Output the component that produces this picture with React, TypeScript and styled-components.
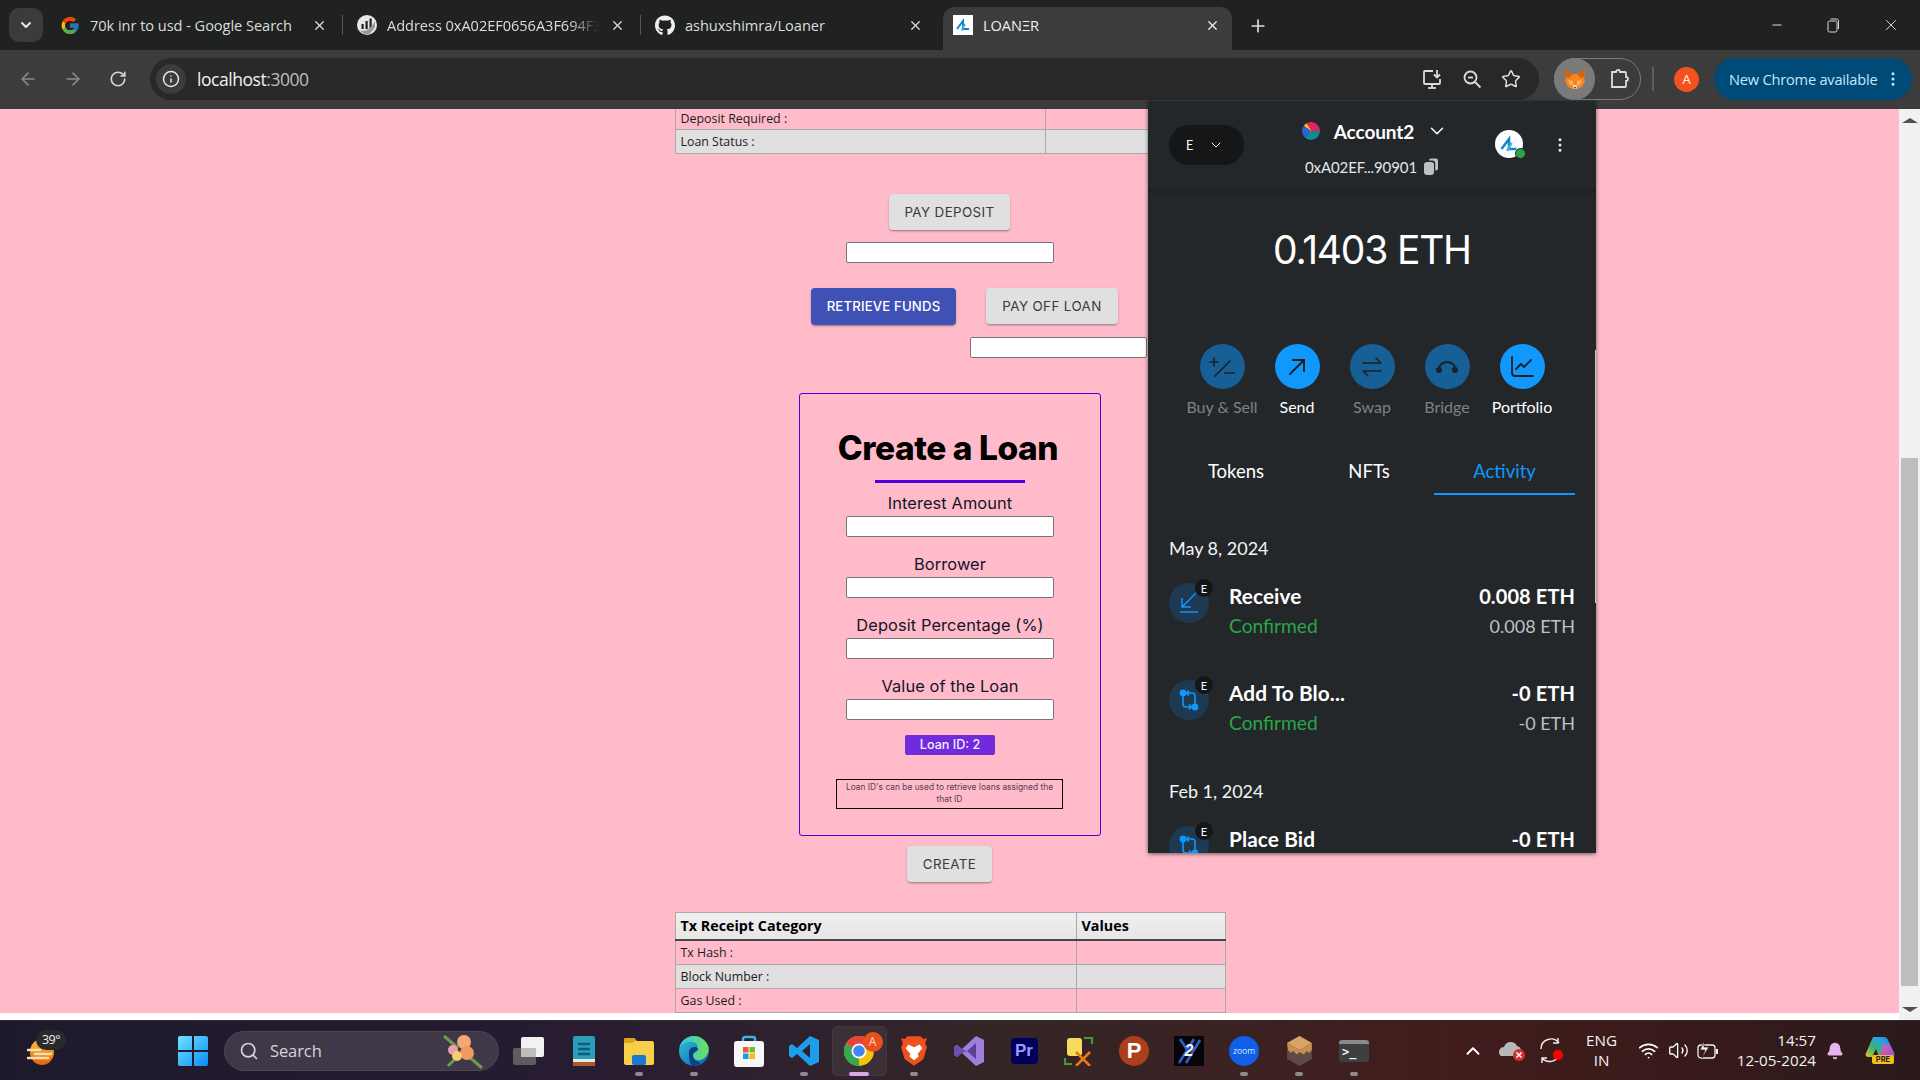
import React from "react";
import styled, { createGlobalStyle } from "styled-components";
import { X, Plus, Minus, ArrowLeft, ArrowRight, RotateCw, Info, Search, Star, ChevronDown, ChevronUp, EllipsisVertical, Wifi, Volume2, Bell } from "lucide-react";
import { FaGithub } from "react-icons/fa";
import { FcGoogle } from "react-icons/fc";

const UI = `"Open Sans", "Noto Sans", sans-serif`;
const GEO = `Inter, "Noto Sans", sans-serif`;
const MM = `Lato, Inter, sans-serif`;
const TABLE = `"Open Sans", "Noto Sans", sans-serif`;

const Global = createGlobalStyle`
  html, body { margin: 0; padding: 0; background: #fff; overflow: hidden; }
  * { box-sizing: border-box; }
`;

const Window = styled.div`
  width: 1920px; height: 1080px; display: flex; flex-direction: column; position: relative; overflow: hidden;
  font-family: ${UI};
`;

/* ---------- browser chrome ---------- */
const TabStrip = styled.div`
  height: 50px; background: #202221; display: flex; align-items: flex-end; padding-left: 9px; flex: none;
`;
const TabSearch = styled.div`
  width: 34px; height: 34px; margin-bottom: 8px; border-radius: 10px; background: #3a3b3b; color: #e6e6e6;
  display: flex; align-items: center; justify-content: center;
`;
const Tab = styled.div<{ $w: number; $active?: boolean; $pad: number; $padR: number; $sep?: boolean }>`
  width: ${p => p.$w}px; height: 43px; display: flex; align-items: center; padding: 0 ${p => p.$padR}px 7px ${p => p.$pad}px; gap: 10px;
  color: ${p => (p.$active ? "#f0f0f0" : "#dcdcdc")}; font-size: 14.6px; letter-spacing: -0.05px; white-space: nowrap;
  background: ${p => (p.$active ? "#3c3c3c" : "transparent")};
  border-radius: 12px 12px 0 0; position: relative;
  ${p => p.$sep ? `&::after { content: ""; position: absolute; right: 0; top: 8px; height: 20px; width: 1px; background: #555; }` : ""}
`;
const TabIcon = styled.span`
  width: 20px; height: 20px; display: flex; align-items: center; justify-content: center; flex: none;
`;
const LoanerTile = styled(TabIcon)`
  background: #fff;
`;
const TabTitle = styled.span`
  flex: 1; overflow: hidden; min-width: 0;
`;
const FadedTitle = styled(TabTitle)`
  -webkit-mask-image: linear-gradient(90deg, #000 85%, transparent);
  mask-image: linear-gradient(90deg, #000 85%, transparent);
`;
const NewTab = styled.div`
  width: 26px; height: 26px; margin: 0 0 11px 13px; color: #dcdcdc; display: flex; align-items: center; justify-content: center;
`;
const WindowControls = styled.div`
  margin-left: auto; display: flex; height: 50px; align-items: center; color: #d8d8d8; padding-right: 1px;
`;
const WinButton = styled.div`
  width: 57px; height: 40px; display: flex; align-items: center; justify-content: center;
`;
const Toolbar = styled.div`
  height: 59px; flex: none; background: #3c3c3c; display: flex; align-items: center; padding: 0 0 1px 5px;
`;
const NavButton = styled.div<{ $dim?: boolean }>`
  width: 45px; height: 40px; display: flex; align-items: center; justify-content: center;
  color: ${p => (p.$dim ? "#8a8a8a" : "#d6d6d6")};
`;
const Omnibox = styled.div`
  width: 1389px; height: 42px; margin-left: 10px; background: #282828; border-radius: 21px; display: flex; align-items: center;
  padding: 0 18px 0 6px; color: #e8e8e8;
`;
const InfoBubble = styled.div`
  width: 30px; height: 30px; border-radius: 50%; background: #3c3c3c; display: flex; align-items: center; justify-content: center; color: #e6e6e6;
`;
const Url = styled.span`
  font-size: 17.5px; margin-left: 11px; letter-spacing: -0.45px; color: #f2f2f2;
`;
const UrlPort = styled.span`color: #bdbdbd;`;
const OmniIcons = styled.div`
  margin-left: auto; display: flex; align-items: center; gap: 19px; color: #dcdcdc;
`;
const ExtPill = styled.div`
  width: 87px; height: 42px; margin-left: 15px; border: 1px solid #7a7a7a; border-radius: 21px; display: flex; align-items: center; justify-content: space-between; padding-right: 11px;
  flex: none;
`;
const FoxBubble = styled.div`
  width: 41px; height: 42px; margin: -1px 0 -1px -1px; border-radius: 21px; background: #7a7a7a; display: flex; align-items: center; justify-content: center;
`;
const ToolDivider = styled.div`
  width: 2px; height: 24px; background: #5f5f5f; margin-left: 11px; flex: none;
`;
const Avatar = styled.div`
  width: 25px; height: 25px; border-radius: 50%; margin-left: 20px; background: #f4511e; color: #ffe; font-size: 13px;
  display: flex; align-items: center; justify-content: center; flex: none;
`;
const UpdatePill = styled.div`
  width: 198px; height: 42px; margin-left: 15px; background: #004a77; border-radius: 21px; color: #c2e7ff; font-size: 14.6px; letter-spacing: -0.2px;
  display: flex; align-items: center; justify-content: space-between; padding: 0 10px 0 15px; flex: none; white-space: nowrap;
`;

/* ---------- page ---------- */
const Viewport = styled.div`
  height: 911px; flex: none; display: flex; background: #fff;
`;
const PageArea = styled.div`
  width: 1899px; height: 904px; background: #ffbbca; overflow: hidden; display: flex; flex-direction: column; align-items: center; padding-left: 1px;
`;
const Scrollbar = styled.div`
  width: 21px; height: 911px; background: #f1f1f1; display: flex; flex-direction: column; align-items: center; color: #505050; font-size: 0;
`;
const ScrollThumb = styled.div`
  width: 17px; height: 528px; margin-top: 335px; background: #bdbdbd; flex: none;
`;
const ArrowUp = styled.div`
  width: 0; height: 0; margin-top: 9px; border: 5px solid transparent; border-top: 0; border-bottom: 5px solid #505050; border-left-width: 8px; border-right-width: 8px; flex: none;
`;
const ArrowDown = styled.div`
  width: 0; height: 0; margin-top: 21px; border: 5px solid transparent; border-bottom: 0; border-top: 5px solid #505050; border-left-width: 8px; border-right-width: 8px; flex: none;
`;

const DataTable = styled.table`
  width: 550px; table-layout: fixed; border-collapse: collapse; font-family: ${TABLE}; font-size: 12.4px; color: #1c1c1c; flex: none;
  td, th { border: 1px solid #a9a9a9; text-align: left; overflow: hidden; white-space: nowrap; }
  td { height: 24px; padding: 1px 5px 0; }
  th { height: 28px; padding: 0 5px; font-weight: 700; font-size: 14.3px; color: #000; background: linear-gradient(#efefef, #e6e6e6); border-bottom: 2px solid #444; }
`;
const ClippedCell = styled.td`
  && { height: 20px; border-top: 0; padding: 0 5px; }
`;
const ShadedRow = styled.tr`
  background: #e0e0e0;
`;
const TopTable = styled(DataTable)`
  margin-bottom: 40px;
`;
const BottomTable = styled(DataTable)`
  margin-top: 30px;
`;
const MuiButton = styled.button<{ $w: number; $primary?: boolean }>`
  width: ${p => p.$w}px; height: ${p => (p.$primary ? 37 : 36)}px; border: 0; border-radius: 4px; padding: 0;
  background: ${p => (p.$primary ? "#3f51b5" : "#e0e0e0")};
  color: ${p => (p.$primary ? "#fff" : "#3a3a3a")}; font-family: ${GEO}; font-size: ${p => (p.$primary ? 13.2 : 13.4)}px; font-weight: ${p => (p.$primary ? 500 : 400)};
  letter-spacing: ${p => (p.$primary ? 0.15 : 0.38)}px; text-transform: uppercase; flex: none;
  box-shadow: 0 2px 2px -1px rgba(0,0,0,.28), 0 1px 3px rgba(0,0,0,.16);
`;
const DepositButton = styled(MuiButton)`
  margin-right: 1px;
`;
const PlainInput = styled.input<{ $w: number }>`
  width: ${p => p.$w}px; height: 21px; background: #fff; border: 1px solid #767676; border-radius: 2px; padding: 0; display: block; flex: none;
`;
const DepositInput = styled(PlainInput)`
  margin: 12px 0 25px 0;
`;
const ActionRow = styled.div`
  display: flex; gap: 30px; margin-left: 29px; flex: none;
`;
const PayOffInput = styled(PlainInput)`
  margin: 12px 0 35px 217px;
`;
const Card = styled.div`
  width: 302px; height: 443px; flex: none; border: 1px solid #4a00dd; border-radius: 3px; display: flex; flex-direction: column; align-items: center; padding-top: 31px;
  font-family: ${GEO};
`;
const CardTitle = styled.h1`
  margin: 0 4px 0 0; font-size: 33.5px; line-height: 46px; font-weight: 800; color: #000; letter-spacing: -0.45px; white-space: nowrap;
`;
const TitleRule = styled.div`
  width: 150px; height: 3px; background: #4a00dd; margin: 9px 0 9px 0; flex: none;
`;
const FieldLabel = styled.label`
  font-size: 16.4px; line-height: 22px; color: #141428; margin-bottom: 2px; white-space: nowrap; letter-spacing: 0.1px;
`;
const Field = styled.div<{ $first?: boolean }>`
  display: flex; flex-direction: column; align-items: center; margin-top: ${p => (p.$first ? 0 : 16)}px;
`;
const LoanBadge = styled.div`
  width: 90px; height: 20px; margin-top: 15px; background: #6f2bdc; color: #f4ecff; font-size: 12.6px; font-weight: 500; border-radius: 2px;
  display: flex; align-items: center; justify-content: center;
`;
const NoteBox = styled.div`
  width: 227px; height: 30px; margin: 24px 1px 0 0; border: 1px solid #000; font-size: 8.4px; line-height: 12px; text-align: center; color: #5a4050; padding: 1px 4px 0;
`;
const CreateButton = styled(MuiButton)`
  margin: 10px 1px 0 0;
`;

/* ---------- wallet popup ---------- */
const Popup = styled.div`
  position: absolute; left: 1148px; top: 101px; width: 448px; height: 752px; background: #24272a; overflow: hidden; font-family: ${MM}; color: #fff;
  box-shadow: 0 1px 4px rgba(0,0,0,.55);
  display: flex; flex-direction: column;
`;
const PopupScrollLine = styled.div`
  position: absolute; right: 0; top: 249px; height: 253px; width: 1.5px; background: #c9c9c9;
`;
const PopupHeader = styled.div`
  height: 88px; flex: none; display: flex; position: relative; padding: 0 17px 0 21px; align-items: center;
  box-shadow: 0 2px 5px rgba(0,0,0,.22);
`;
const NetworkPill = styled.div`
  width: 75px; height: 40px; background: #141618; border-radius: 20px; display: flex; align-items: center; padding-left: 17px; gap: 15px; font-size: 12.5px; flex: none;
`;
const AccountBlock = styled.div`
  width: 220px; margin-left: 21px; display: flex; flex-direction: column; align-items: center; gap: 15px; padding-top: 5px;
`;
const AccountRow = styled.div`
  display: flex; align-items: center; font-size: 19px; font-weight: 700; letter-spacing: -0.1px;
`;
const AccountDot = styled.span`
  width: 18px; height: 18px; border-radius: 50%; margin-right: 14px;
  background: conic-gradient(#e0245e 0 25%, #0f8a8d 25% 60%, #2962d8 60% 85%, #f3b90b 85% 92%, #e0245e 92%);
`;
const AccountChevron = styled.span`
  margin-left: 12px; display: flex;
`;
const AddressRow = styled.div`
  display: flex; align-items: center; gap: 6px; font-size: 15px; color: #e4e6e8; letter-spacing: -0.1px; margin-right: 6px;
`;
const LogoBubble = styled.div`
  width: 28px; height: 28px; margin-left: 10px; margin-top: -2px; border-radius: 50%; background: #fff; position: relative; display: flex; align-items: center; justify-content: center; flex: none;
`;
const StatusDot = styled.span`
  position: absolute; right: -3px; bottom: -1px; width: 11px; height: 11px; border-radius: 50%; background: #28a745; border: 1px solid #24272a;
`;
const KebabWrap = styled.div`
  margin-left: 28px; display: flex; color: #e8e8e8;
`;
const Balance = styled.div`
  font-family: ${GEO}; text-align: center; font-size: 39px; font-weight: 400; line-height: 48px; margin-top: 37px; letter-spacing: -1.2px; flex: none;
`;
const ActionsGrid = styled.div`
  display: flex; justify-content: center; margin-top: 70px; flex: none;
`;
const WalletAction = styled.div`
  width: 75px; display: flex; flex-direction: column; align-items: center; gap: 8px;
`;
const ActionCircle = styled.div<{ $on?: boolean }>`
  width: 45px; height: 45px; border-radius: 50%; background: ${p => (p.$on ? "#1098fc" : "#175f97")}; display: flex; align-items: center; justify-content: center;
`;
const ActionLabel = styled.span<{ $on?: boolean }>`
  font-size: 16px; line-height: 20px; color: ${p => (p.$on ? "#fff" : "#7e8184")}; white-space: nowrap;
`;
const WalletTabs = styled.div`
  display: grid; grid-template-columns: 136px 130px 141px; margin: 42px 0 0 20px; flex: none;
`;
const WalletTab = styled.div<{ $on?: boolean }>`
  height: 36px; padding-top: 0; text-align: center; font-size: 18.5px; line-height: 24px;
  color: ${p => (p.$on ? "#1098fc" : "#fff")};
  border-bottom: 2px solid ${p => (p.$on ? "#1098fc" : "transparent")};
`;
const ActivityList = styled.div`
  padding: 0 21px; display: flex; flex-direction: column; flex: none;
`;
const DateHead = styled.div<{ $gap: number }>`
  font-size: 18px; line-height: 24px; margin-top: ${p => p.$gap}px; color: #f4f5f6;
`;
const TxRow = styled.div<{ $gap: number }>`
  display: flex; margin-top: ${p => p.$gap}px; height: 59px; position: relative;
`;
const TxCircle = styled.div`
  width: 40px; height: 40px; border-radius: 50%; background: #1d3a52; position: relative; display: flex; align-items: center; justify-content: center; flex: none;
`;
const TxBadge = styled.span`
  position: absolute; left: 26px; top: -4px; width: 18px; height: 18px; border-radius: 50%; background: #141618; color: #fff; font-size: 11px; display: flex; align-items: center; justify-content: center;
`;
const TxBody = styled.div`
  flex: 1; margin-left: 20px; display: flex; flex-direction: column;
`;
const TxLine = styled.div`
  display: flex; justify-content: space-between; height: 29.5px; line-height: 26px; align-items: flex-start;
`;
const TxTitle = styled.span`
  font-size: 20.8px; font-weight: 700; font-family: ${MM}; letter-spacing: 0.1px;
`;
const TxStatus = styled.span`
  font-size: 19.2px; color: #28a745;
`;
const TxAmount = styled.span`
  font-size: 20px; font-weight: 700; letter-spacing: 0.1px;
`;
const TxFiat = styled.span`
  font-size: 18px; color: #bbc0c5;
`;

/* ---------- taskbar ---------- */
const Taskbar = styled.div`
  height: 60px; flex: none; display: flex; align-items: center; border-top: 1px solid #2a2a30;
  background: linear-gradient(90deg, #1e1a2c 0%, #251b31 25%, #2c2030 38%, #342526 52%, #3c2122 66%, #431c1c 75%, #381a1a 88%, #2a1a1c 100%);
  color: #fff;
`;
const WeatherSlot = styled.div`
  width: 165px; height: 60px; position: relative; flex: none; padding: 18px 0 0 27px;
`;
const WeatherTemp = styled.span`
  position: absolute; left: 36px; top: 9px; height: 20px; width: 30px; border-radius: 10px; background: #2a2a2c; color: #eee; font-size: 12.5px; letter-spacing: -0.5px;
  display: flex; align-items: center; justify-content: center;
`;
const AppSlot = styled.div<{ $active?: boolean }>`
  width: 55px; height: 50px; display: flex; align-items: center; justify-content: center; flex: none; position: relative;
  ${p => p.$active ? `background: rgba(255,255,255,.06); border-radius: 5px; box-shadow: inset 0 0 0 1px rgba(255,255,255,.04);` : ""}
`;
const AppDot = styled.span<{ $active?: boolean }>`
  position: absolute; bottom: 0; left: 50%; transform: translateX(-50%); height: 4px; border-radius: 2px;
  width: ${p => (p.$active ? 20 : 8)}px; background: ${p => (p.$active ? "#d9a8e6" : "#8f8a8f")};
`;
const SearchPill = styled.div`
  width: 275px; height: 40px; margin: 0 2.5px 0 4px; border-radius: 20px; background: #3f3848; border: 1px solid #4c4654; display: flex; align-items: center; padding-left: 14px; color: #d8d4dc; font-size: 16.5px; gap: 11px; flex: none; letter-spacing: -0.1px;
`;
const PillArt = styled.span`
  margin-left: auto; margin-right: 12px; display: flex;
`;
const Tray = styled.div`
  margin-left: auto; display: flex; align-items: center; height: 60px; flex: none; padding-right: 14px;
`;
const TrayCell = styled.div<{ $w: number }>`
  width: ${p => p.$w}px; display: flex; align-items: center; justify-content: center; flex: none;
`;
const TrayStack = styled.div<{ $w: number; $right?: boolean }>`
  width: ${p => p.$w}px; display: flex; flex-direction: column; line-height: 20px; font-size: 15.2px; flex: none; color: #f2f2f2; margin-top: -2px;
  align-items: ${p => (p.$right ? "flex-end" : "center")}; white-space: nowrap; padding-right: ${p => (p.$right ? 0 : 3)}px;
`;

/* ---------- drawings ---------- */
const Fox = () => (
  <svg width="24" height="24" viewBox="0 0 24 24">
    <polygon points="2,2 10,7 14,7 22,2 21,10 22,14 19,20 14,22 10,22 5,20 2,14 3,10" fill="#f6851b" />
    <polygon points="2,2 10,7 6,11 3,10" fill="#d2641a" />
    <polygon points="22,2 14,7 18,11 21,10" fill="#d2641a" />
    <polygon points="5,13 10,14 10,18 7,18" fill="#ffb060" />
    <polygon points="19,13 14,14 14,18 17,18" fill="#ffb060" />
    <polygon points="10,18 14,18 13.5,22 10.5,22" fill="#eadccd" />
    <polygon points="11,20 13,20 12,22" fill="#222" />
  </svg>
);
const LoanerMark = ({ s = 16 }: { s?: number }) => (
  <svg width={s} height={s} viewBox="0 0 16 16">
    <path d="M2 12 L8 4 L8 12 L14 12" fill="none" stroke="#1583c9" strokeWidth="2" />
    <path d="M6.5 13.5 L10 7" fill="none" stroke="#35b6ea" strokeWidth="2" />
  </svg>
);
const ScanMark = () => (
  <svg width="20" height="20" viewBox="0 0 20 20">
    <circle cx="10" cy="10" r="10" fill="#e8e8e8" />
    <rect x="4.5" y="9" width="2.2" height="5" fill="#202221" />
    <rect x="8.5" y="6" width="2.2" height="8" fill="#202221" />
    <rect x="12.5" y="3.5" width="2.2" height="10.5" fill="#202221" />
    <path d="M2 15 Q11 19 18 6 L18 12 Q14 20 8 19.5 Z" fill="#9a9a9a" />
  </svg>
);
const InstallIcon = () => (
  <svg width="22" height="22" viewBox="0 0 22 22" fill="none" stroke="#dcdcdc" strokeWidth="1.8">
    <path d="M12 3H4a1 1 0 0 0-1 1v11a1 1 0 0 0 1 1h14a1 1 0 0 0 1-1v-4" />
    <path d="M7 20h8" /><path d="M11 16v4" />
    <path d="M16 2v7M13 6.5l3 3 3-3" />
  </svg>
);
const ZoomOutIcon = () => (
  <svg width="20" height="20" viewBox="0 0 20 20" fill="none" stroke="#dcdcdc" strokeWidth="1.8">
    <circle cx="8.5" cy="8.5" r="6" /><path d="M13 13l5.5 5.5" /><path d="M6 8.5h5" />
  </svg>
);
const PuzzleIcon = () => (
  <svg width="20" height="22" viewBox="0 0 20 22" fill="none" stroke="#dcdcdc" strokeWidth="1.8">
    <path d="M3 4h4a2 2 0 0 1 4 0h5a1 1 0 0 1 1 1v4a2 2 0 0 1 0 4v5a1 1 0 0 1-1 1H3z" />
  </svg>
);
const RestoreIcon = () => (
  <svg width="13" height="15" viewBox="0 0 13 15" fill="none" stroke="#d8d8d8" strokeWidth="1">
    <rect x="1" y="3" width="9" height="11" rx="1.5" /><path d="M3.5 1h6a2 2 0 0 1 2 2v8" />
  </svg>
);
const CopyIcon = () => (
  <svg width="16" height="17" viewBox="0 0 16 17" fill="#bbc0c5">
    <rect x="1" y="4" width="10" height="13" rx="3" />
    <path d="M6 2.5a2 2 0 0 1 2-2h5a2 2 0 0 1 2 2v8a2 2 0 0 1-2 2h-.8V5.5a3 3 0 0 0-3-3z" />
  </svg>
);
const stroke = "#1d2024";
const BuySell = () => (
  <svg width="28" height="28" viewBox="0 0 28 28" fill="none" stroke={stroke} strokeWidth="1.7" strokeLinecap="round">
    <path d="M2 9h8M6 5v8M22 8L7 23M17 20h9" />
  </svg>
);
const SendArrow = () => (
  <svg width="24" height="24" viewBox="0 0 24 24" fill="none" stroke={stroke} strokeWidth="2" strokeLinecap="round">
    <path d="M5 19L19 5M8 5h11v11" />
  </svg>
);
const SwapArrows = () => (
  <svg width="24" height="24" viewBox="0 0 24 24" fill="none" stroke={stroke} strokeWidth="1.6" strokeLinecap="round">
    <path d="M3 8h18M16 3l5 5M21 16H3M8 21l-5-5" />
  </svg>
);
const BridgeArc = () => (
  <svg width="24" height="16" viewBox="0 0 24 16" fill="none" stroke={stroke} strokeWidth="2">
    <path d="M4 10a8 7 0 0 1 16 0" />
    <circle cx="4" cy="11" r="2" fill={stroke} /><circle cx="20" cy="11" r="2" fill={stroke} />
  </svg>
);
const ChartIcon = () => (
  <svg width="24" height="24" viewBox="0 0 24 24" fill="none" stroke={stroke} strokeWidth="1.8" strokeLinecap="round" strokeLinejoin="round">
    <path d="M2 2v16a3 3 0 0 0 3 3h18" /><path d="M6 14l5-5 3 3 7-7" />
  </svg>
);
const ReceiveIcon = () => (
  <svg width="22" height="24" viewBox="0 0 22 24" fill="none" stroke="#1098fc" strokeWidth="1.4">
    <path d="M18 2L4 16M4 7v9h9" /><path d="M2 21h18" />
  </svg>
);
const ContractIcon = () => (
  <svg width="22" height="24" viewBox="0 0 22 24" fill="none" stroke="#1098fc" strokeWidth="1.6">
    <circle cx="5" cy="5" r="2.6" fill="#1098fc" /><circle cx="17" cy="19" r="2.6" fill="#1098fc" />
    <path d="M5 7v9a3 3 0 0 0 3 3h5M11 16.5l2.5 2.5-2.5 2.5M17 17V8a3 3 0 0 0-3-3H9M11 2.5L8.5 5 11 7.5" />
  </svg>
);
const WeatherIcon = () => (
  <svg width="28" height="26" viewBox="0 0 28 26">
    <defs><linearGradient id="wx" x1="0" y1="0" x2="0" y2="1"><stop offset="0" stopColor="#fbc531" /><stop offset="1" stopColor="#e8610c" /></linearGradient></defs>
    <ellipse cx="15" cy="13" rx="12" ry="13" fill="url(#wx)" />
    <path d="M1 11h12M8 15h16M1 19h20" stroke="#f5deb0" strokeWidth="2.6" strokeLinecap="round" />
  </svg>
);
const WinLogo = () => (
  <svg width="30" height="30" viewBox="0 0 30 30">
    <defs><linearGradient id="wn" x1="0" y1="0" x2="1" y2="1"><stop offset="0" stopColor="#6fe3ff" /><stop offset="1" stopColor="#0a8cf5" /></linearGradient></defs>
    <path d="M0 2a2 2 0 0 1 2-2h12v14H0zM16 0h12a2 2 0 0 1 2 2v12H16zM0 16h14v14H2a2 2 0 0 1-2-2zM16 16h14v12a2 2 0 0 1-2 2H16z" fill="url(#wn)" />
  </svg>
);
const Bouquet = () => (
  <svg width="44" height="38" viewBox="0 0 44 38">
    <path d="M2 4l14 12M40 36L24 22M6 34l12-12" stroke="#6f9a4a" strokeWidth="3" />
    <circle cx="22" cy="10" r="7" fill="#f3a878" /><circle cx="11" cy="18" r="5" fill="#ef9db0" />
    <circle cx="25" cy="21" r="7" fill="#f19a60" /><circle cx="15" cy="24" r="5" fill="#f5d06a" />
  </svg>
);
const TaskViewIcon = () => (
  <svg width="32" height="28" viewBox="0 0 32 28">
    <rect x="0" y="11" width="23" height="17" rx="2" fill="#5e5c5f" />
    <rect x="8" y="0" width="23" height="20" rx="2" fill="#f2f2f2" />
    <rect x="8" y="11" width="15" height="9" fill="#bdbdbd" />
  </svg>
);
const NotepadIcon = () => (
  <svg width="22" height="30" viewBox="0 0 22 30">
    <rect width="22" height="30" rx="2" fill="#2b9fb8" />
    <rect y="25" width="22" height="5" fill="#a85a2a" /><rect y="23" width="22" height="3" fill="#e8e8e8" />
    <path d="M5 8h12M5 13h12M5 18h12" stroke="#0c5e7c" strokeWidth="2.4" />
  </svg>
);
const FolderIcon = () => (
  <svg width="30" height="28" viewBox="0 0 30 28">
    <path d="M0 3a2 2 0 0 1 2-2h8l3 3h15a2 2 0 0 1 2 2v20a2 2 0 0 1-2 2H2a2 2 0 0 1-2-2z" fill="#f7cf4a" />
    <path d="M0 3a2 2 0 0 1 2-2h8l3 3h-2l-3 2H0z" fill="#dca312" />
    <rect x="8" y="18" width="14" height="10" rx="2" fill="#1b78d0" />
  </svg>
);
const EdgeIcon = () => (
  <svg width="30" height="30" viewBox="0 0 30 30">
    <defs>
      <linearGradient id="ed" x1="0" y1="0" x2="1" y2="1"><stop offset="0" stopColor="#2fc3d6" /><stop offset="1" stopColor="#0b5fb5" /></linearGradient>
      <linearGradient id="eg" x1="0" y1="0" x2="1" y2="0"><stop offset="0" stopColor="#35c1f1" /><stop offset="1" stopColor="#6de05a" /></linearGradient>
    </defs>
    <circle cx="15" cy="15" r="15" fill="url(#ed)" />
    <path d="M29.5 11C27 4 21 0 15 0 8 0 2 5 .5 11c3-4 8-6 13-5 7 1 5 7 3 8-2 1-5 1-5 4 0 4 5 7 10 6 5-1 9-7 8-13z" fill="url(#eg)" />
    <path d="M10 16c0-3 3-5 6-5 3 0 4 2 2 4-2 1-4 2-4 4 0 3 3 7 8 8-3 2-6 3-9 3-3-4-3-10-3-14z" fill="#0d3f84" />
  </svg>
);
const StoreIcon = () => (
  <svg width="30" height="32" viewBox="0 0 30 32">
    <path d="M9 8V4a2 2 0 0 1 2-2h8a2 2 0 0 1 2 2v4" fill="none" stroke="#38b6f0" strokeWidth="2.4" />
    <rect y="6" width="30" height="26" rx="3" fill="#f6f6f6" />
    <rect x="9" y="12" width="5.5" height="5.5" fill="#ea5b30" /><rect x="15.5" y="12" width="5.5" height="5.5" fill="#7cb82b" />
    <rect x="9" y="18.5" width="5.5" height="5.5" fill="#1c9bea" /><rect x="15.5" y="18.5" width="5.5" height="5.5" fill="#fdb813" />
  </svg>
);
const VsCodeIcon = () => (
  <svg width="30" height="30" viewBox="0 0 30 30">
    <path d="M21 0l9 4v22l-9 4-13-12-5 4-3-2V10l3-2 5 4zM21 8l-8 7 8 7z" fill="#1e9ded" fillRule="evenodd" />
  </svg>
);
const ChromeIcon = () => (
  <svg width="30" height="30" viewBox="0 0 30 30">
    <circle cx="15" cy="15" r="15" fill="#f4c20d" />
    <path d="M15 15L2 7.5A15 15 0 0 0 15 30z" fill="#34a853" />
    <path d="M15 15L2 7.5A15 15 0 0 1 28 7.5z" fill="#ea4335" />
    <circle cx="15" cy="15" r="7.5" fill="#fff" /><circle cx="15" cy="15" r="5.8" fill="#4285f4" />
  </svg>
);
const ChromeBadge = styled.span`
  position: absolute; top: 6px; right: 4px; width: 20px; height: 20px; border-radius: 50%; background: #e8501c; color: #ffd9c8; font-size: 12px; display: flex; align-items: center; justify-content: center;
`;
const BraveIcon = () => (
  <svg width="26" height="30" viewBox="0 0 28 32">
    <path d="M7 0h14l3 3 4-1-2 6 2 4-4 13-10 7-10-7-4-13 2-4-2-6 4 1z" fill="#f0501c" />
    <path d="M14 12l-6-3-3 4 5 6-1 3 5 4 5-4-1-3 5-6-3-4z" fill="#fff" />
  </svg>
);
const VsIcon = () => (
  <svg width="30" height="30" viewBox="0 0 30 30">
    <path d="M22 0l8 4v22l-8 4-14-13-5 4-3-2V11l3-2 5 4z" fill="#a07fdc" />
    <path d="M22 7l-9 8 9 8z" fill="#5a3f96" /><path d="M0 11l3-2 5 4 5 2-5 2-5 4-3-2z" fill="#6c4fae" />
  </svg>
);
const PrBox = styled.div`
  width: 27px; height: 26px; border-radius: 4px; background: #00005b; color: #9999ff; font-family: "Liberation Sans", sans-serif; font-weight: 700; font-size: 17px; display: flex; align-items: center; justify-content: center;
`;
const ToolIcon = () => (
  <svg width="30" height="30" viewBox="0 0 30 30" fill="none">
    <rect x="3" y="2" width="15" height="18" rx="3" fill="#f5dc5a" />
    <path d="M20 2h8v6M1 22v6h7" stroke="#3f9a3f" strokeWidth="2.2" />
    <path d="M12 16l14 14M26 16L12 30" stroke="#e87a1c" strokeWidth="2.6" />
  </svg>
);
const PsiphonBubble = styled.div`
  width: 30px; height: 30px; border-radius: 50%; background: #ac3e1c; color: #fff; font-family: "Liberation Sans", sans-serif; font-weight: 700; font-size: 22px; display: flex; align-items: center; justify-content: center;
`;
const X2Box = styled.div`
  width: 30px; height: 30px; background: #05050a; display: flex; align-items: center; justify-content: center; position: relative; overflow: hidden;
  color: #eef2ff; font-family: "Liberation Sans", sans-serif; font-weight: 700; font-size: 16px; font-style: italic;
  svg { position: absolute; left: 0; top: 0; }
`;
const X2Strokes = () => (
  <svg width="30" height="30" viewBox="0 0 30 30">
    <path d="M6 3l8 12M20 3L5 27M26 4L12 27" stroke="#2c62c8" strokeWidth="2.6" fill="none" />
  </svg>
);
const X2Digit = styled.span`
  position: relative;
`;
const ZoomBubble = styled.div`
  width: 30px; height: 30px; border-radius: 50%; background: #0f5fe8; color: #dfe9ff; font-size: 8.5px; display: flex; align-items: center; justify-content: center;
`;
const CubeIcon = () => (
  <svg width="27" height="30" viewBox="0 0 28 34">
    <polygon points="14,0 28,8 28,26 14,34 0,26 0,8" fill="#5f4a47" />
    <polygon points="14,0 28,8 14,16 0,8" fill="#d9a566" />
    <path d="M0 8l14 8 14-8v8l-3 3-3-2-3 4-5-3-3 3-4-4-3 2-3-3z" fill="#c98f52" />
  </svg>
);
const TermBox = styled.div`
  width: 30px; height: 22px; border-radius: 3px; background: #3f3f3f; border-top: 4px solid #8a8a8a; color: #eee; font-family: "DejaVu Sans Mono", monospace; font-size: 12px; padding: 1px 0 0 3px; line-height: 15px; font-weight: 700;
`;
const CloudIcon = () => (
  <svg width="30" height="26" viewBox="0 0 30 26">
    <path d="M3 18a5 5 0 0 1 3-9 7 7 0 0 1 13-1 5 5 0 0 1 3 8v2z" fill="#b8b8b8" />
    <circle cx="21" cy="17" r="6" fill="#d32f2f" />
    <path d="M18.5 14.5l5 5M23.5 14.5l-5 5" stroke="#fff" strokeWidth="1.6" />
  </svg>
);
const SyncIcon = () => (
  <svg width="30" height="28" viewBox="0 0 30 28" fill="none" stroke="#f0f0f0" strokeWidth="1.4">
    <path d="M3 12a10 10 0 0 1 18-6M20 1v5h-5" />
    <path d="M21 18a10 10 0 0 1-17 3M4 26v-5h5" />
    <circle cx="20" cy="18" r="5" fill="#f00" stroke="none" />
  </svg>
);
const BatteryIcon = () => (
  <svg width="22" height="22" viewBox="0 0 22 22" fill="none" stroke="#f0f0f0" strokeWidth="1.3">
    <rect x="1" y="5" width="17" height="13" rx="3" /><path d="M20 9v5" strokeWidth="2" />
    <path d="M7 1L3 10h5l-3 8 7-11H7z" fill="#f0f0f0" stroke="#2c1a18" strokeWidth=".7" />
  </svg>
);
const CopilotIcon = () => (
  <svg width="30" height="28" viewBox="0 0 30 28">
    <defs>
      <linearGradient id="cp" x1="0" y1="1" x2="1" y2="0"><stop offset="0" stopColor="#e8c430" /><stop offset=".35" stopColor="#3bb56a" /><stop offset=".7" stopColor="#2a9fe8" /><stop offset="1" stopColor="#1d6fd8" /></linearGradient>
      <linearGradient id="cq" x1="0" y1="0" x2="1" y2="1"><stop offset="0" stopColor="#e65fa8" /><stop offset="1" stopColor="#8f4fe0" /></linearGradient>
    </defs>
    <path d="M8 0h11c2 0 3 1 4 3l6 13c1 3-1 4-3 4H14l-3-8-4 8H4c-3 0-4-2-3-4z" fill="url(#cp)" />
    <path d="M19 8h6l4 8c1 3-1 4-3 4H14l3-9c.4-2 1-3 2-3z" fill="url(#cq)" />
    <rect x="7" y="18" width="22" height="9" rx="2" fill="#f2bf1a" />
    <text x="18" y="25.4" textAnchor="middle" fontSize="7.5" fontWeight="700" fill="#222" fontFamily="Inter, sans-serif">PRE</text>
  </svg>
);

const apps: { node: React.ReactNode; dot?: boolean; active?: boolean; badge?: boolean }[] = [
  { node: <TaskViewIcon /> },
  { node: <NotepadIcon /> },
  { node: <FolderIcon />, dot: true },
  { node: <EdgeIcon />, dot: true },
  { node: <StoreIcon /> },
  { node: <VsCodeIcon />, dot: true },
  { node: <ChromeIcon />, active: true, badge: true },
  { node: <BraveIcon />, dot: true },
  { node: <VsIcon /> },
  { node: <PrBox>Pr</PrBox> },
  { node: <ToolIcon /> },
  { node: <PsiphonBubble>P</PsiphonBubble> },
  { node: <X2Box><X2Strokes /><X2Digit>2</X2Digit></X2Box> },
  { node: <ZoomBubble>zoom</ZoomBubble>, dot: true },
  { node: <CubeIcon />, dot: true },
  { node: <TermBox>&gt;_</TermBox>, dot: true },
];

const actions = [
  { label: "Buy & Sell", icon: <BuySell /> },
  { label: "Send", icon: <SendArrow />, on: true },
  { label: "Swap", icon: <SwapArrows /> },
  { label: "Bridge", icon: <BridgeArc /> },
  { label: "Portfolio", icon: <ChartIcon />, on: true },
];

export default function App() {
  return (
    <Window>
      <Global />
      <TabStrip>
        <TabSearch><ChevronDown size={16} strokeWidth={3} /></TabSearch>
        <Tab $w={300} $pad={17} $padR={16} $sep>
          <TabIcon><FcGoogle size={21} /></TabIcon>
          <TabTitle>70k inr to usd - Google Search</TabTitle>
          <X size={15} />
        </Tab>
        <Tab $w={298} $pad={14} $padR={16} $sep>
          <TabIcon><ScanMark /></TabIcon>
          <FadedTitle>Address 0xA02EF0656A3F694F3</FadedTitle>
          <X size={15} />
        </Tab>
        <Tab $w={302} $pad={14} $padR={20}>
          <TabIcon><FaGithub size={21} color="#eee" /></TabIcon>
          <TabTitle>ashuxshimra/Loaner</TabTitle>
          <X size={15} />
        </Tab>
        <Tab $w={289} $pad={10} $padR={12} $active>
          <LoanerTile><LoanerMark /></LoanerTile>
          <TabTitle>LOANΞR</TabTitle>
          <X size={15} />
        </Tab>
        <NewTab><Plus size={20} /></NewTab>
        <WindowControls>
          <WinButton><Minus size={14} /></WinButton>
          <WinButton><RestoreIcon /></WinButton>
          <WinButton><X size={18} strokeWidth={1.3} /></WinButton>
        </WindowControls>
      </TabStrip>
      <Toolbar>
        <NavButton $dim><ArrowLeft size={20} /></NavButton>
        <NavButton $dim><ArrowRight size={20} /></NavButton>
        <NavButton><RotateCw size={18} strokeWidth={2.2} /></NavButton>
        <Omnibox>
          <InfoBubble><Info size={18} /></InfoBubble>
          <Url>localhost<UrlPort>:3000</UrlPort></Url>
          <OmniIcons>
            <InstallIcon />
            <ZoomOutIcon />
            <Star size={20} strokeWidth={1.8} />
          </OmniIcons>
        </Omnibox>
        <ExtPill>
          <FoxBubble><Fox /></FoxBubble>
          <PuzzleIcon />
        </ExtPill>
        <ToolDivider />
        <Avatar>A</Avatar>
        <UpdatePill>
          New Chrome available
          <EllipsisVertical size={18} />
        </UpdatePill>
      </Toolbar>

      <Viewport>
        <PageArea>
          <TopTable>
            <colgroup><col width="370" /><col width="180" /></colgroup>
            <tbody>
              <tr><ClippedCell>Deposit Required :</ClippedCell><ClippedCell /></tr>
              <ShadedRow><td>Loan Status :</td><td /></ShadedRow>
            </tbody>
          </TopTable>
          <DepositButton $w={121}>Pay Deposit</DepositButton>
          <DepositInput $w={208} />
          <ActionRow>
            <MuiButton $w={145} $primary>Retrieve Funds</MuiButton>
            <MuiButton $w={132}>Pay Off Loan</MuiButton>
          </ActionRow>
          <PayOffInput $w={177} />
          <Card>
            <CardTitle>Create a Loan</CardTitle>
            <TitleRule />
            <Field $first><FieldLabel>Interest Amount</FieldLabel><PlainInput $w={208} /></Field>
            <Field><FieldLabel>Borrower</FieldLabel><PlainInput $w={208} /></Field>
            <Field><FieldLabel>Deposit Percentage (%)</FieldLabel><PlainInput $w={208} /></Field>
            <Field><FieldLabel>Value of the Loan</FieldLabel><PlainInput $w={208} /></Field>
            <LoanBadge>Loan ID: 2</LoanBadge>
            <NoteBox>Loan ID's can be used to retrieve loans assigned the that ID</NoteBox>
          </Card>
          <CreateButton $w={85}>Create</CreateButton>
          <BottomTable>
            <colgroup><col width="401" /><col width="149" /></colgroup>
            <thead><tr><th>Tx Receipt Category</th><th>Values</th></tr></thead>
            <tbody>
              <tr><td>Tx Hash :</td><td /></tr>
              <ShadedRow><td>Block Number :</td><td /></ShadedRow>
              <tr><td>Gas Used :</td><td /></tr>
            </tbody>
          </BottomTable>
        </PageArea>
        <Scrollbar>
          <ArrowUp />
          <ScrollThumb />
          <ArrowDown />
        </Scrollbar>
      </Viewport>

      <Taskbar>
        <WeatherSlot>
          <WeatherIcon />
          <WeatherTemp>39°</WeatherTemp>
        </WeatherSlot>
        <AppSlot><WinLogo /></AppSlot>
        <SearchPill>
          <Search size={20} />
          Search
          <PillArt><Bouquet /></PillArt>
        </SearchPill>
        {apps.map((a, i) => (
          <AppSlot key={i} $active={a.active}>
            {a.node}
            {a.badge && <ChromeBadge>A</ChromeBadge>}
            {(a.dot || a.active) && <AppDot $active={a.active} />}
          </AppSlot>
        ))}
        <Tray>
          <TrayCell $w={40}><ChevronUp size={22} strokeWidth={2.2} /></TrayCell>
          <TrayCell $w={40}><CloudIcon /></TrayCell>
          <TrayCell $w={40}><SyncIcon /></TrayCell>
          <TrayStack $w={60}><span>ENG</span><span>IN</span></TrayStack>
          <TrayCell $w={30}><Wifi size={21} /></TrayCell>
          <TrayCell $w={30}><Volume2 size={21} strokeWidth={1.5} /></TrayCell>
          <TrayCell $w={30}><BatteryIcon /></TrayCell>
          <TrayStack $w={93} $right><span>14:57</span><span>12-05-2024</span></TrayStack>
          <TrayCell $w={38}><Bell size={18} fill="#e8b5ee" color="#e8b5ee" /></TrayCell>
          <TrayCell $w={52}><CopilotIcon /></TrayCell>
        </Tray>
      </Taskbar>

      <Popup>
        <PopupScrollLine />
        <PopupHeader>
          <NetworkPill>E<ChevronDown size={16} strokeWidth={1.5} /></NetworkPill>
          <AccountBlock>
            <AccountRow>
              <AccountDot />Account2
              <AccountChevron><ChevronDown size={22} strokeWidth={1.6} /></AccountChevron>
            </AccountRow>
            <AddressRow>0xA02EF...90901<CopyIcon /></AddressRow>
          </AccountBlock>
          <LogoBubble><LoanerMark s={20} /><StatusDot /></LogoBubble>
          <KebabWrap><EllipsisVertical size={18} /></KebabWrap>
        </PopupHeader>
        <Balance>0.1403 ETH</Balance>
        <ActionsGrid>
          {actions.map(a => (
            <WalletAction key={a.label}>
              <ActionCircle $on={a.on}>{a.icon}</ActionCircle>
              <ActionLabel $on={a.on}>{a.label}</ActionLabel>
            </WalletAction>
          ))}
        </ActionsGrid>
        <WalletTabs>
          <WalletTab>Tokens</WalletTab>
          <WalletTab>NFTs</WalletTab>
          <WalletTab $on>Activity</WalletTab>
        </WalletTabs>
        <ActivityList>
          <DateHead $gap={41}>May 8, 2024</DateHead>
          <TxRow $gap={23}>
            <TxCircle><ReceiveIcon /><TxBadge>E</TxBadge></TxCircle>
            <TxBody>
              <TxLine><TxTitle>Receive</TxTitle><TxAmount>0.008 ETH</TxAmount></TxLine>
              <TxLine><TxStatus>Confirmed</TxStatus><TxFiat>0.008 ETH</TxFiat></TxLine>
            </TxBody>
          </TxRow>
          <TxRow $gap={38}>
            <TxCircle><ContractIcon /><TxBadge>E</TxBadge></TxCircle>
            <TxBody>
              <TxLine><TxTitle>Add To Blo...</TxTitle><TxAmount>-0 ETH</TxAmount></TxLine>
              <TxLine><TxStatus>Confirmed</TxStatus><TxFiat>-0 ETH</TxFiat></TxLine>
            </TxBody>
          </TxRow>
          <DateHead $gap={40}>Feb 1, 2024</DateHead>
          <TxRow $gap={23}>
            <TxCircle><ContractIcon /><TxBadge>E</TxBadge></TxCircle>
            <TxBody>
              <TxLine><TxTitle>Place Bid</TxTitle><TxAmount>-0 ETH</TxAmount></TxLine>
            </TxBody>
          </TxRow>
        </ActivityList>
      </Popup>
    </Window>
  );
}
